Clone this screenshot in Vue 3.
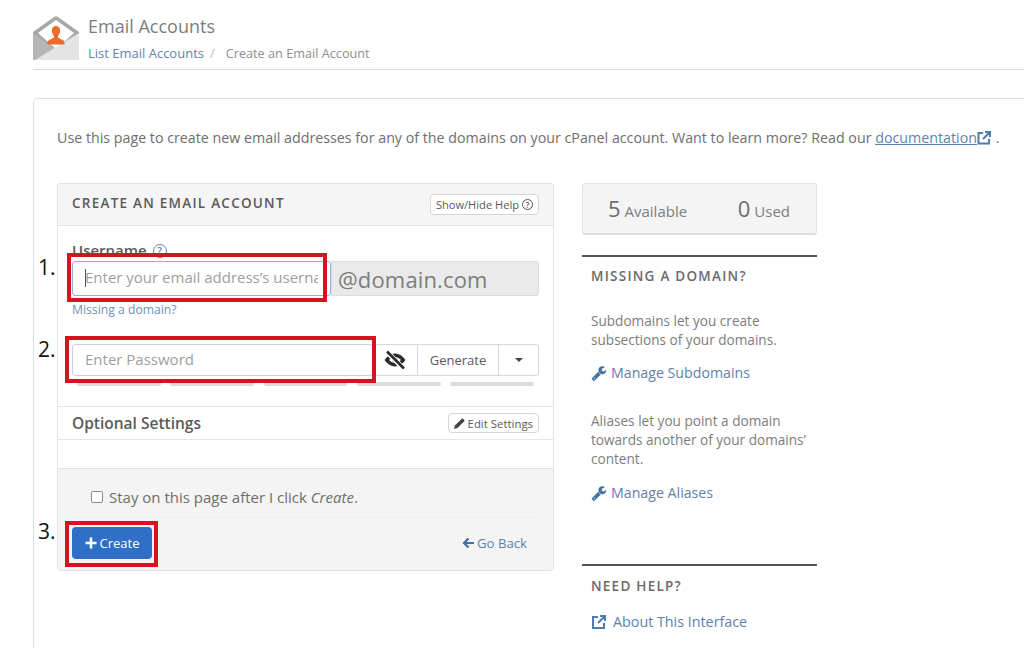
<script setup>
const bars = [1, 2, 3, 4, 5]
const wrench = 'M448 1472q0-26-19-45t-45-19-45 19-19 45 19 45 45 19 45-19 19-45zm644-420l-682 682q-37 37-90 37-52 0-91-37l-106-108q-38-36-38-90 0-53 38-91l681-681q39 98 114.5 173.5t173.5 114.5zm634-435q0 39-23 106-47 134-164.5 217.5t-258.5 83.5q-185 0-316.5-131.5t-131.5-316.5 131.5-316.5 316.5-131.5q58 0 121.5 16.5t107.5 46.5q16 11 16 28t-16 28l-293 169v224l193 107q5-3 79-48.5t135.5-81 70.5-35.5q15 0 23.5 10t8.5 25z'
</script>

<template>
  <div class="page">
    <header class="head">
      <svg class="logo" viewBox="0 0 46 44" width="46" height="44">
        <path d="M0 16 21 1q2-1.400 4 0L46 16V42q0 2-2 2H2q-2 0-2-2Z" fill="#a8a8a8" />
        <path d="M5 17 23 4 41 17 23 33Z" fill="#fff" />
        <path d="M0 17 22 33 0 44Z" fill="#b6b6b6" />
        <path d="M46 17V42q0 2-2 2H2L23 31Z" fill="#e4e4e4" />
        <path d="M23 10c3 0 4.500 2.500 4 5.500-.3 2-1 3.500-2 4.500v1.500l5.500 3c1 .6 1 2 1 4H14.500c0-2 0-3.400 1-4l5.500-3V20c-1-1-1.700-2.500-2-4.500-.5-3 1-5.500 4-5.500Z" fill="#ee6c2b" />
      </svg>
      <div class="head-text">
        <h1>Email Accounts</h1>
        <div class="crumbs">
          <a>List Email Accounts</a><span class="sep">/</span><span class="cur">Create an Email Account</span>
        </div>
      </div>
    </header>

    <main class="card">
      <p class="intro">
        Use this page to create new email addresses for any of the domains on your cPanel account. Want to learn more? Read our
        <a class="doc">documentation</a>
        <svg class="ext" viewBox="0 0 16 16" width="16" height="16">
          <path d="M7 3H2.500v10.500H13V9M9 2h5v5M14 2 7 9" fill="none" stroke="#4f7bb0" stroke-width="2" />
        </svg>
        .
      </p>

      <div class="columns">
        <section class="panel">
          <div class="panel-head">
            <h2>CREATE AN EMAIL ACCOUNT</h2>
            <button class="mini">Show/Hide Help <span class="help small">?</span></button>
          </div>

          <div class="fields">
            <label class="label">Username <span class="help">?</span></label>
            <div class="user-row">
              <div class="input-wrap">
                <input class="input focus" placeholder="Enter your email address’s username" />
                <span class="caret"></span>
              </div>
              <div class="domain">@domain.com</div>
            </div>
            <a class="missing">Missing a domain?</a>

            <div class="pass-row">
              <input class="input pass" placeholder="Enter Password" />
              <div class="eye">
                <svg viewBox="0 0 24 20" width="24" height="20">
                  <path d="M1.500 10c3-4 6.500-6.500 10.500-6.500S19.500 6 22.500 10c-3 4-6.500 6.500-10.500 6.500S4.500 14 1.500 10Z" fill="#2b2b2b" />
                  <path d="M6 10c2-2 4-3 6-3s4 1 6 3c-2 2-4 3-6 3s-4-1-6-3Z" fill="#fff" />
                  <circle cx="12" cy="10" r="2.600" fill="#2b2b2b" />
                  <path d="M3 1 21 19" stroke="#fff" stroke-width="5" />
                  <path d="M4 1.500 21 18.500" stroke="#2b2b2b" stroke-width="2.600" />
                </svg>
              </div>
              <div class="gen">Generate</div>
              <div class="drop"><i></i></div>
            </div>
            <div class="bars"><span v-for="b in bars" :key="b"></span></div>
          </div>

          <div class="opt-row">
            <strong>Optional Settings</strong>
            <button class="mini">
              <svg viewBox="0 0 12 12" width="11" height="11"><path d="M0 12 1 8.200 8.500.8a1 1 0 0 1 1.400 0l1.300 1.300a1 1 0 0 1 0 1.400L3.800 11Z" fill="#444" /></svg>
              Edit Settings
            </button>
          </div>
          <div class="opt-gap"></div>

          <div class="foot">
            <label class="stay"><span class="box"></span>Stay on this page after I click&nbsp;<em>Create</em>.</label>
            <div class="actions">
              <button class="create">
                <svg viewBox="0 0 12 12" width="12" height="12"><path d="M6 .5v11M.5 6h11" stroke="#fff" stroke-width="2.600" /></svg>
                Create
              </button>
              <a class="back">
                <svg viewBox="0 0 12 12" width="12" height="12"><path d="M6.500 1.500 2 6l4.500 4.500M2 6h10" fill="none" stroke="#3f709f" stroke-width="2.200" /></svg>
                Go Back
              </a>
            </div>
          </div>
        </section>

        <aside class="side">
          <div class="stats">
            <span><b>5</b> Available</span>
            <span><b>0</b> Used</span>
          </div>

          <div class="block first">
            <h3>MISSING A DOMAIN?</h3>
            <p class="p1">Subdomains let you create subsections of your domains.</p>
            <a class="link">
              <svg viewBox="0 0 1792 1792" width="16" height="16"><path :d="wrench" fill="#3f709f" /></svg>
              Manage Subdomains
            </a>
            <p class="p2">Aliases let you point a domain towards another of your domains’ content.</p>
            <a class="link alias">
              <svg viewBox="0 0 1792 1792" width="16" height="16"><path :d="wrench" fill="#3f709f" /></svg>
              Manage Aliases
            </a>
          </div>

          <div class="block second">
            <h3>NEED HELP?</h3>
            <a class="link about">
              <svg viewBox="0 0 16 16" width="16" height="16"><path d="M7 3H2v11h11V9M9 2h5v5M14 2 7 9" fill="none" stroke="#4f7bb0" stroke-width="2" /></svg>
              About This Interface
            </a>
          </div>
        </aside>
      </div>
    </main>

    <div class="red r1"></div>
    <div class="red r2"></div>
    <div class="red r3"></div>
    <span class="num n1">1.</span>
    <span class="num n2">2.</span>
    <span class="num n3">3.</span>
  </div>
</template>

<style>
html, body { margin: 0; background: #fff; }
</style>

<style scoped>
.page {
  position: relative;
  width: 1024px;
  height: 648px;
  overflow: hidden;
  background: #fff;
  font-family: "Open Sans", sans-serif;
  color: #6b6b6b;
  font-size: 14px;
}
a { color: #5f82ad; }
.head {
  display: flex;
  gap: 9px;
  margin-left: 33px;
  padding-top: 16px;
  height: 53px;
  border-bottom: 1px solid #dcdcdc;
}
.logo { flex: none; }
.head-text { margin-top: -1px; }
h1 {
  margin: 0;
  font-size: 18px;
  line-height: 22px;
  font-weight: 400;
  color: #7d7d7d;
}
.crumbs { margin-top: 7px; font-size: 13px; line-height: 18px; color: #8e8e8e; }
.cur { font-size: 12.700px; }
.sep { margin: 0 11px 0 6px; color: #bbb; }
.card {
  margin: 28px -12px 0 33px;
  padding: 29px 23px 0;
  height: 560px;
  border: 1px solid #d6e3ea;
  border-radius: 5px;
}
.intro {
  margin: 0;
  font-size: 14.250px;
  line-height: 20px;
  white-space: nowrap;
  color: #6e6e6e;
}
.doc { text-decoration: underline; }
.ext { vertical-align: -3px; margin-left: -1px; }
.columns { display: flex; gap: 28px; margin-top: 35px; align-items: flex-start; }
.panel {
  width: 497px;
  height: 388px;
  box-sizing: border-box;
  border: 1px solid #e2e2e2;
  border-radius: 3px;
  display: flex;
  flex-direction: column;
}
.panel-head {
  height: 41px;
  flex: none;
  display: flex;
  align-items: center;
  justify-content: space-between;
  padding: 0 14px;
  background: #f5f5f5;
  border-bottom: 1px solid #e2e2e2;
}
h2 {
  margin: 0 0 3px;
  font-size: 13.500px;
  font-weight: 600;
  letter-spacing: 1.250px;
  color: #5a5a5a;
}
.mini {
  display: inline-flex;
  align-items: center;
  gap: 3px;
  height: 21px;
  padding: 0 5px;
  background: #fff;
  border: 1px solid #d5d5d5;
  border-radius: 4px;
  font: 400 11.100px "Open Sans", sans-serif;
  color: #5a5a5a;
}
.help {
  display: inline-flex;
  width: 12px;
  height: 12px;
  margin-left: 2px;
  align-items: center;
  justify-content: center;
  border: 1.500px solid #5f82ad;
  border-radius: 50%;
  font-size: 10px;
  font-weight: 600;
  line-height: 1;
  color: #5f82ad;
  vertical-align: 1px;
}
.help.small { width: 9px; height: 9px; margin-left: 0; font-size: 8px; border: 1px solid #555; color: #555; }
.fields { height: 180px; flex: none; padding: 14px 14px 0; box-sizing: border-box; }
.label { display: block; height: 21px; line-height: 21px; font-size: 15px; font-weight: 600; color: #5a5a5a; }
.user-row { display: flex; height: 35px; }
.input-wrap { position: relative; width: 259px; }
.input {
  box-sizing: border-box;
  width: 100%;
  height: 100%;
  padding: 0 12px 3px;
  background: #fff;
  border: 1px solid #cfcfcf;
  border-radius: 3px;
  font: 400 15px "Open Sans", sans-serif;
  color: #555;
  outline: none;
}
.input::placeholder { color: #a0a0a0; opacity: 1; }
.focus { border-color: #8fb6d8; }
.caret {
  position: absolute;
  left: 13px;
  top: 8px;
  width: 1px;
  height: 18px;
  background: #555;
}
.domain {
  flex: 1;
  display: flex;
  align-items: center;
  padding-left: 6px;
  background: #eaeaea;
  border: 1px solid #dcdcdc;
  border-radius: 0 3px 3px 0;
  font-size: 22px;
  letter-spacing: .15px;
  color: #7d7d7d;
}
.missing { display: block; margin-top: 6px; height: 16px; font-size: 12.200px; line-height: 16px; color: #6c93b3; }
.pass-row {
  display: flex;
  height: 32px;
  margin-top: 26px;
  border-radius: 4px;
}
.pass { flex: 1; width: auto; min-width: 0; padding-bottom: 2px; }
.eye {
  width: 44px;
  display: flex;
  align-items: center;
  justify-content: center;
  box-sizing: border-box;
  border-top: 1px solid #d8d8d8;
  border-bottom: 1px solid #d8d8d8;
}
.gen, .drop {
  display: flex;
  align-items: center;
  justify-content: center;
  box-sizing: border-box;
  border: 1px solid #d8d8d8;
  background: #fff;
  color: #5a5a5a;
}
.gen { width: 82px; font-size: 13px; }
.drop { width: 40px; border-left: 0; border-radius: 0 4px 4px 0; }
.drop i {
  width: 0;
  height: 0;
  border: 4px solid transparent;
  border-top: 4px solid #444;
  border-bottom: 0;
}
.bars { display: flex; gap: 9.500px; margin: 6px 5px 0; }
.bars span { flex: 1; height: 4px; background: #dcdcdc; border-radius: 2px; }
.opt-row {
  flex: none;
  height: 34px;
  box-sizing: border-box;
  display: flex;
  align-items: center;
  justify-content: space-between;
  padding: 0 14px;
  border-top: 1px solid #e5e5e5;
  border-bottom: 1px solid #e5e5e5;
}
.opt-row strong { font-size: 15.500px; font-weight: 600; color: #5a5a5a; }
.opt-row .mini { height: 20px; gap: 3px; padding: 0 5px; font-size: 11.400px; }
.opt-gap { height: 28px; flex: none; }
.foot {
  flex: 1;
  background: #f4f4f4;
  border-top: 1px solid #e2e2e2;
  padding: 0 14px;
  display: flex;
  flex-direction: column;
}
.stay {
  display: flex;
  align-items: center;
  box-sizing: border-box;
  height: 49px;
  padding: 7px 0 0 19px;
  border-bottom: 1px solid #eee;
  font-size: 15px;
  color: #6e6e6e;
}
.box {
  width: 10px;
  height: 10px;
  margin-right: 6px;
  background: #fff;
  border: 1px solid #8a8a8a;
  border-radius: 2px;
}
.actions {
  display: flex;
  align-items: center;
  justify-content: space-between;
  margin-top: 9px;
}
.create {
  display: inline-flex;
  align-items: center;
  justify-content: center;
  gap: 3px;
  width: 80px;
  height: 32px;
  background: #2f6fc8;
  border: 0;
  border-radius: 4px;
  font: 400 13px "Open Sans", sans-serif;
  color: #fff;
}
.back {
  display: inline-flex;
  align-items: center;
  gap: 3px;
  margin-right: 12px;
  font-size: 13.200px;
}
.side { width: 235px; }
.stats {
  box-sizing: border-box;
  height: 52px;
  padding: 0 26px 2px 25px;
  display: flex;
  align-items: center;
  justify-content: space-between;
  background: #f4f4f4;
  border: 1px solid #e4e4e4;
  border-bottom: 2px solid #ddd;
  border-radius: 3px;
}
.stats b { font-size: 22px; font-weight: 400; color: #6e6e6e; }
.stats span { font-size: 15px; color: #7d7d7d; }
.block { border-top: 2px solid #555; padding: 0 9px; font-size: 13.600px; line-height: 19px; }
.first { margin-top: 20px; height: 309px; box-sizing: border-box; }
h3 {
  margin: 0;
  padding-top: 11px;
  font-size: 13.500px;
  line-height: 17px;
  font-weight: 600;
  letter-spacing: 1.250px;
  color: #6a6a6a;
}
.block p { margin: 0; color: #7d7d7d; }
.p1 { padding-top: 26px; }
.p2 { padding-top: 29px; }
.link { display: flex; align-items: center; gap: 4px; margin-top: 14px; font-size: 14.200px; }
.alias { margin-top: 15px; }
.about { gap: 6px; margin-top: 17px; font-size: 14.300px; }
.second { height: 100px; box-sizing: border-box; }
.second h3 { padding-top: 12px; }
.red {
  position: absolute;
  box-sizing: border-box;
  border: 4px solid #d4141f;
  pointer-events: none;
}
.r1 { left: 67px; top: 253px; width: 260px; height: 49px; }
.r2 { left: 65px; top: 336px; width: 311px; height: 47px; }
.r3 { left: 65px; top: 521px; width: 93px; height: 46px; }
.num { position: absolute; left: 38px; font-size: 21px; line-height: 24px; color: #111; }
.n1 { top: 255px; }
.n2 { top: 337px; }
.n3 { top: 519px; }
</style>
